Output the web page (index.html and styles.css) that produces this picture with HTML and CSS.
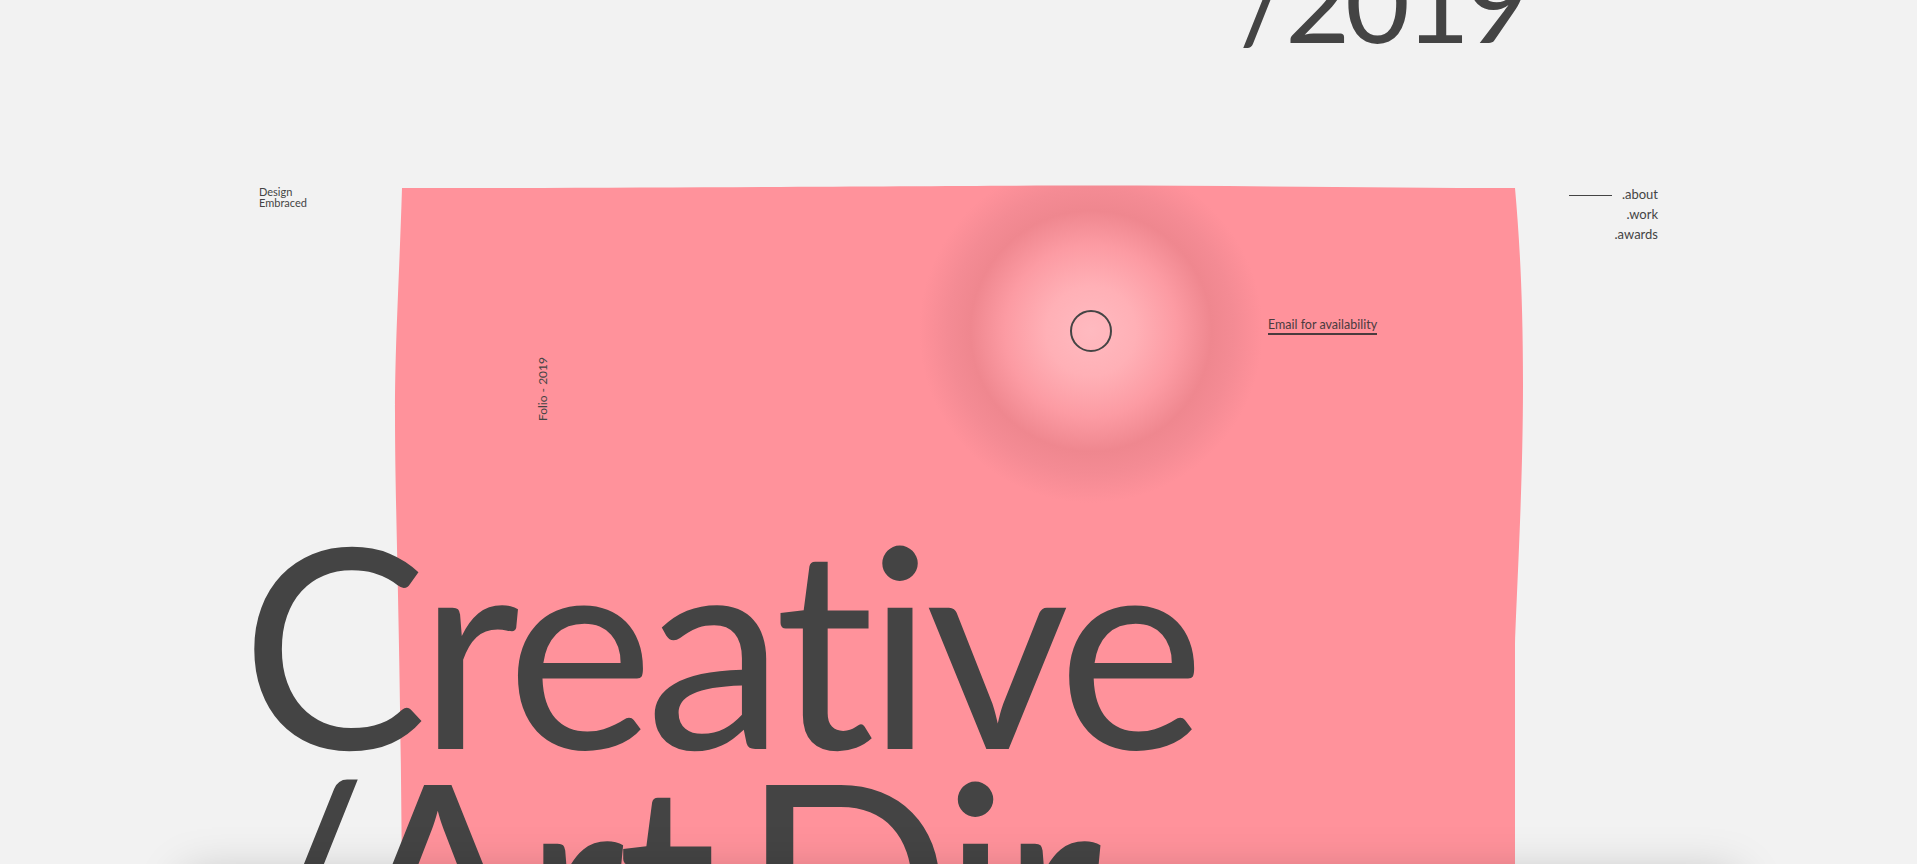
FILE: index.html
```html
<!DOCTYPE html>
<html lang="en">
<head>
<meta charset="utf-8">
<title>Design Embraced — Folio 2019</title>
<link rel="stylesheet" href="styles.css">
</head>
<body>
<div class="page">
  <header class="top">
    <div class="year">/2019</div>
  </header>
  <section class="hero">
    <div class="brand">Design<br>Embraced</div>
    <div class="panel">
      <svg class="panel-shape" viewBox="0 0 1133 700" width="1133" height="700" aria-hidden="true">
        <defs>
          <radialGradient id="glow" gradientUnits="userSpaceOnUse" cx="699" cy="147" r="172">
            <stop offset="0" stop-color="#ffbac0"/>
            <stop offset="0.26" stop-color="#ffb0b6"/>
            <stop offset="0.5" stop-color="#fc9ba3"/>
            <stop offset="0.7" stop-color="#ef878f"/>
            <stop offset="0.83" stop-color="#f48b94"/>
            <stop offset="1" stop-color="#ff929b"/>
          </radialGradient>
        </defs>
        <path fill="url(#glow)" d="M10,4 C300,4 550,1.5 700,1.5 C850,1.5 1000,4 1123,4 C1128,60 1131,120 1131,200 C1131,300 1125,400 1123,460 L1123,700 L10,700 C8,420 3,330 3,230 C3,160 7,100 10,4 Z"/>
      </svg>
      <div class="panel-row">
        <span class="folio">Folio - 2019</span>
        <span class="cursor"></span>
        <a class="email" href="#">Email for availability</a>
      </div>
    </div>
    <nav class="nav">
      <a class="nav-item" href="#"><span class="nav-line"></span>.about</a>
      <a class="nav-item" href="#">.work</a>
      <a class="nav-item" href="#">.awards</a>
    </nav>
    <h1 class="headline">Creative<br>/Art Dir</h1>
  </section>
  <div class="sheet"></div>
</div>
</body>
</html>
```

FILE: styles.css
```css
html, body {
  margin: 0;
  height: 864px;
  overflow: hidden;
  background: #f2f2f2;
}
body {
  font-family: Lato, "Liberation Sans", sans-serif;
  color: #444;
}
.page {
  position: relative;
  height: 864px;
  overflow: hidden;
}
.top {
  display: grid;
  grid-template-columns: 143px 1113px 143px;
  padding: 0 259px;
  height: 188px;
}
.year {
  grid-column: 2;
  text-align: right;
  font-size: 112px;
  line-height: 112px;
  margin-top: -56px;
  margin-right: -10px;
  letter-spacing: -5px;
}
.hero {
  display: grid;
  grid-template-columns: 143px 1113px 143px;
  grid-template-rows: 335px auto;
  padding: 0 259px;
}
.brand {
  grid-column: 1;
  grid-row: 1;
  font-size: 11px;
  line-height: 11px;
  margin-top: -2px;
}
.panel {
  grid-column: 2;
  grid-row: 1 / 3;
  position: relative;
}
.panel-shape {
  position: absolute;
  left: -10px;
  top: -4px;
  width: 1133px;
  height: 700px;
}
.panel-row {
  position: relative;
  display: flex;
  align-items: flex-start;
}
.folio {
  writing-mode: vertical-rl;
  transform: rotate(180deg);
  font-size: 12px;
  line-height: 14px;
  margin-left: 134px;
  margin-top: 169px;
  white-space: nowrap;
}
.cursor {
  width: 38px;
  height: 38px;
  border: 2px solid #444;
  border-radius: 50%;
  margin-left: 520px;
  margin-top: 122px;
  flex: none;
}
.email {
  margin-left: 156px;
  margin-top: 130px;
  font-size: 12.5px;
  line-height: 14px;
  color: #4a3b3e;
  text-decoration: none;
  border-bottom: 2px solid #4a3b3e;
  padding-bottom: 1px;
  white-space: nowrap;
}
.nav {
  grid-column: 3;
  grid-row: 1;
  display: flex;
  flex-direction: column;
  align-items: flex-end;
  font-size: 13px;
  line-height: 20px;
  margin-top: -4px;
}
.nav-item {
  color: #444;
  text-decoration: none;
  display: flex;
  align-items: center;
}
.nav-line {
  width: 43px;
  height: 1px;
  background: #444;
  margin-right: 10px;
  margin-top: 2px;
}
.headline {
  grid-column: 1 / 4;
  grid-row: 2;
  margin: 0 0 0 -18px;
  font-size: 279px;
  line-height: 236px;
  letter-spacing: -8px;
  word-spacing: -32px;
  font-weight: 400;
  position: relative;
  white-space: nowrap;
}
.sheet {
  position: absolute;
  left: 185px;
  right: 180px;
  top: 876px;
  height: 300px;
  background: #f2f2f2;
  box-shadow: 0 0 45px rgba(0, 0, 0, 0.22);
  z-index: 5;
}
```
